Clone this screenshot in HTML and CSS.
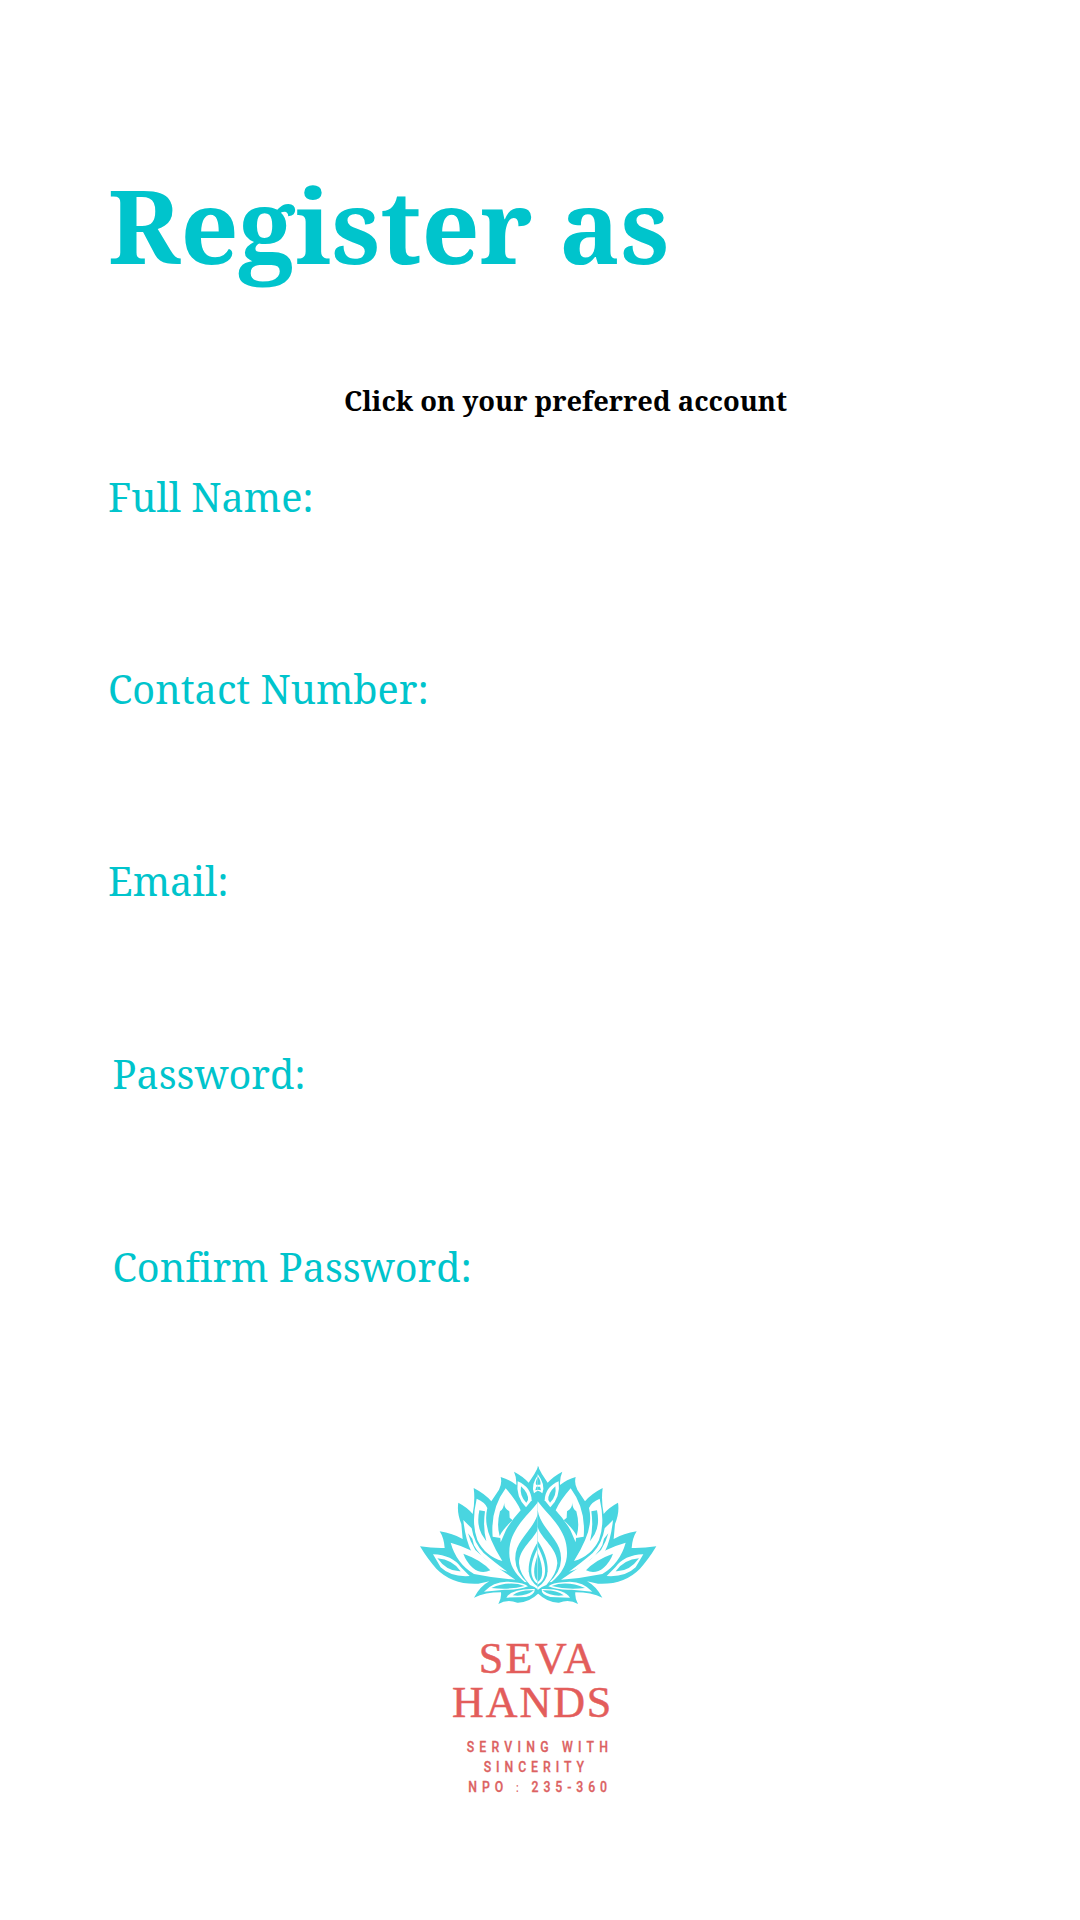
FILE: index.html
```html
<!DOCTYPE html>
<html lang="en">
<head>
<meta charset="utf-8">
<title>Register</title>
<link rel="stylesheet" href="styles.css">
</head>
<body>
<main class="page">
  <h1 class="title">Register as</h1>
  <p class="hint">Click on your preferred account</p>
  <form class="fields">
    <label class="field">Full Name:</label>
    <label class="field">Contact Number:</label>
    <label class="field last-plain">Email:</label>
    <label class="field inset">Password:</label>
    <label class="field inset">Confirm Password:</label>
  </form>
  <svg class="logo" viewBox="0 0 810 1080" role="img" aria-label="Seva Hands">
    <defs>
      <g id="half">
        <path class="teal" d="M416 48Q405 72 386 98Q369 79 342 65Q350 82 349 105Q329 89 302 81Q307 101 297 119L274 154Q256 132 221 114Q226 151 218 192Q205 174 175 158Q170 187 184 222L188 267Q158 250 119 244Q132 264 134 294Q98 295 60 289Q84 329 109 356Q157 405 235 401L268 394Q241 408 222 443Q255 427 303 427Q305 443 295 462Q321 447 352 458Q386 459 416 430Z"/>
        <path class="white" d="M416 72Q391 105 402 130Q409 123 416 122Z"/>
        <path class="teal" d="M416 78Q405 94 408 104H416ZM416 110H409L406 121L416 119Z"/>
        <path class="white" d="M353 94Q394 112 395 151L378 172Q347 142 353 94Z"/>
        <path class="teal" d="M363 109Q386 130 384 150L379 158Q358 139 363 109Z"/>
        <path class="white" d="M317 115Q350 153 362 181Q333 213 318 240L302 277L301 264L278 260Q271 177 317 115Z"/>
        <path class="teal" d="M313 154Q310 174 328 184L329 203L338 211Q307 239 299 258Q289 224 300 184Q312 177 313 154Z"/>
        <path class="white" d="M230 146Q256 157 262 174Q251 219 274 271Q286 300 307 333Q256 319 232 270Q213 219 230 146Z"/>
        <path class="teal" d="M238 181Q229 223 245 253L259 274Q248 232 255 184Z"/>
        <path class="white" d="M190 210L215 235Q222 279 251 309Q281 335 322 365Q243 341 215 306Q196 269 190 210Z"/>
        <path class="teal" d="M204 250Q210 274 226 300L275 344Q236 314 222 286L217 266Z"/>
        <path class="white" d="M152 278Q213 295 259 330L346 389Q285 385 222 372Q169 340 152 278Z"/>
        <path class="teal" d="M190 311Q244 330 271 361Q243 374 218 353Q199 336 190 311Z"/>
        <path class="white" d="M99 313Q157 315 183 352L209 378Q153 382 122 352Z"/>
        <path class="teal" d="M112 325Q158 329 182 364Q142 366 112 325Z"/>
        <path class="white" d="M252 425Q287 387 341 397Q371 399 384 409Q355 421 314 419Z"/>
        <path class="teal" d="M274 414Q328 391 374 408Q330 420 274 414Z"/>
        <path class="white" d="M319 443Q336 415 404 417Q406 434 378 441Z"/>
        <path class="teal" d="M338 436Q360 419 402 421Q376 441 338 436Z"/>
        <path class="white" d="M416 154C386 195 328 237 328 306Q326 357 374 396L416 400Z"/>
        <path class="teal" d="M416 180C407 240 342 267 346 330Q347 368 386 402H416Z"/>
        <path class="white" d="M416 231C405 267 357 294 357 340Q359 372 390 405Q405 410 416 420Z"/>
        <path class="teal" d="M416 272C398 299 385 331 386 364Q388 394 416 412Z"/>
        <path class="white" d="M416 289C382 354 391 390 416 404Z"/>
        <path class="teal" d="M416 308C396 357 400 386 416 396Z"/>
      </g>
    </defs>
    <use href="#half"/>
    <use href="#half" transform="matrix(-1 0 0 1 829 0)"/>
    <g class="brand">
      <text x="236" y="668" textLength="350">SEVA</text>
      <text x="156" y="801" textLength="478">HANDS</text>
    </g>
    <g class="tagline">
      <text transform="translate(200 906) scale(.8 1)" textLength="530">SERVING WITH</text>
      <text transform="translate(251 965) scale(.8 1)" textLength="376">SINCERITY</text>
      <text transform="translate(205 1025) scale(.8 1)" textLength="520">NPO <tspan class="colon">:</tspan> 235-360</text>
    </g>
  </svg>
</main>
</body>
</html>
```
FILE: styles.css
```css
* { box-sizing: border-box; }
body { margin: 0; background: #fff; }
.page {
  width: 1080px;
  height: 1920px;
  overflow: hidden;
  padding: 134px 108px 0;
  font-family: "Noto Serif", "DejaVu Serif Condensed", "DejaVu Serif", serif;
  font-variant-ligatures: none;
  color: #00c4cc;
}
.title { margin: 0; font-size: 101.7px; line-height: 181px; font-weight: 700; white-space: nowrap; }
.hint { margin: 66px 0 0 236px; font-size: 27.3px; line-height: 40px; font-weight: 700; color: #000; white-space: nowrap; }
.fields { display: flex; flex-direction: column; margin-top: 44px; }
.field { height: 192px; font-size: 39.6px; line-height: 64px; white-space: nowrap; }
.last-plain { height: 193px; }
.inset { height: 193px; padding-left: 4.5px; }
.logo { display: block; width: 270px; height: 360px; margin: 22px 0 0 292px; }
.teal { fill: #49d5e0; }
.white { fill: #fff; }
.brand { font-family: "Liberation Serif", serif; font-size: 132px; fill: #e35d5b; stroke: #e35d5b; stroke-width: 1.5; }
.tagline { font-family: "Liberation Sans Narrow", Roboto, sans-serif; font-size: 46px; font-weight: 500; fill: #dc6262; stroke: #dc6262; stroke-width: 1; }
.colon { font-size: 38px; stroke: none; }
```
